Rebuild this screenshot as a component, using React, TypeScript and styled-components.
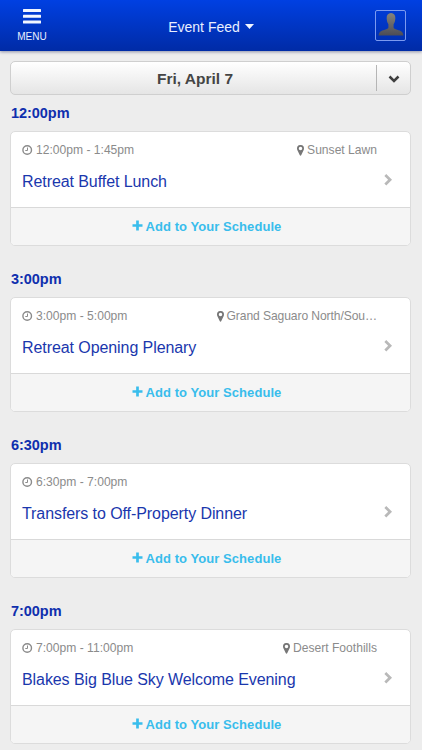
import React from "react";
import styled, { createGlobalStyle } from "styled-components";

const GlobalStyle = createGlobalStyle`
  * { box-sizing: border-box; }
  body {
    margin: 0;
    background: #ededed;
    font-family: "Liberation Sans", Arial, Helvetica, sans-serif;
  }
  button { font-family: inherit; border: 0; padding: 0; background: none; }
  svg { display: block; flex: none; }
`;

const Screen = styled.div`
  height: 750px;
  overflow: hidden;
  background: #ededed;
`;

const Header = styled.header`
  display: grid;
  grid-template-columns: 64px 1fr 64px;
  height: 51px;
  background: linear-gradient(#0040e2, #002ba6);
  box-shadow: 0 1px 3px rgba(0, 10, 70, 0.4);
  color: #e9efff;
`;

const MenuButton = styled.button`
  display: flex;
  flex-direction: column;
  align-items: center;
  justify-content: flex-start;
  padding-top: 9px;
  gap: 7px;
  color: inherit;
  font-size: 10px;
  line-height: 12px;
`;

const FeedTitle = styled.button`
  display: flex;
  align-items: center;
  justify-content: center;
  gap: 5px;
  padding-top: 2px;
  color: inherit;
  font-size: 14px;
  line-height: 18px;
`;

const Avatar = styled.div`
  display: flex;
  align-items: flex-end;
  justify-content: center;
  width: 31px;
  height: 31px;
  margin: 10px 0 0 17px;
  padding-bottom: 4px;
  border: 1px solid #7c9af0;
  border-radius: 2px;
`;

const DayPicker = styled.button`
  display: flex;
  align-items: center;
  width: 401px;
  height: 34px;
  margin: 10px 0 0 10px;
  border: 1px solid #cfcfcf;
  border-radius: 5px;
  background: linear-gradient(#ffffff, #e5e5e5);
  color: #454545;
`;

const DayLabel = styled.span`
  flex: 1;
  padding: 2px 0 0 3px;
  font-size: 15.5px;
  font-weight: bold;
  line-height: 20px;
`;

const DayToggle = styled.span`
  display: flex;
  align-items: center;
  justify-content: center;
  width: 34px;
  height: 26px;
  padding-top: 2px;
  border-left: 1px solid #b5b5b5;
`;

const Slot = styled.section`
  height: 166px;
  padding: 8px 11px 0 10px;
`;

const SlotTime = styled.h2`
  margin: 0 0 8px;
  padding-left: 1px;
  color: #0f2fae;
  font-size: 14.5px;
  font-weight: bold;
  letter-spacing: -0.05px;
  line-height: 20px;
`;

const Card = styled.article`
  height: 115px;
  overflow: hidden;
  border: 1px solid #dcdcdc;
  border-radius: 5px;
  background: #ffffff;
`;

const CardBody = styled.div`
  height: 75px;
  padding: 10px 15px 0 11px;
`;

const Meta = styled.div`
  display: flex;
  justify-content: space-between;
  padding-right: 18px;
  color: #8b8b8b;
  font-size: 12.1px;
  line-height: 16px;
`;

const MetaItem = styled.span<{ $tracking?: number }>`
  display: flex;
  align-items: center;
  gap: 3px;
  letter-spacing: ${(p) => p.$tracking ?? 0}px;
  white-space: nowrap;
`;

const TitleRow = styled.div`
  display: flex;
  align-items: center;
  justify-content: space-between;
  margin-top: 13px;
`;

const EventName = styled.h3`
  margin: 0;
  color: #1a37ad;
  font-size: 16px;
  font-weight: normal;
  letter-spacing: -0.08px;
  line-height: 22px;
`;

const ChevronBox = styled.span`
  padding: 0 2px 4px 0;
`;

const AddButton = styled.button`
  display: flex;
  align-items: center;
  justify-content: center;
  gap: 3px;
  width: 100%;
  height: 38px;
  padding-right: 8px;
  border-top: 1px solid #d9d9d9;
  background: #f5f5f5;
  color: #39bdec;
  font-size: 13px;
  font-weight: bold;
  letter-spacing: 0.06px;
  line-height: 18px;
`;

const PlusBox = styled.span`
  padding-bottom: 2px;
`;

const MenuIcon = () => (
  <svg width="18" height="15" viewBox="0 0 18 15" fill="#f1f5ff">
    <rect y="0" width="18" height="3" rx="0.5" />
    <rect y="5.8" width="18" height="3" rx="0.5" />
    <rect y="11.6" width="18" height="3" rx="0.5" />
  </svg>
);

const CaretIcon = () => (
  <svg width="9" height="5" viewBox="0 0 9 5">
    <path d="M0 0h9L4.5 5z" fill="#f1f5ff" />
  </svg>
);

const PersonIcon = () => (
  <svg width="26" height="23" viewBox="0 0 27 23" preserveAspectRatio="none">
    <defs>
      <linearGradient id="person" x1="0" y1="0" x2="0" y2="1">
        <stop offset="0" stopColor="#85837c" />
        <stop offset="1" stopColor="#4c4c56" />
      </linearGradient>
    </defs>
    <path
      d="M13.5 0c3 0 4.600 2.100 4.500 5.300-.1 2.500-.7 4.500-1.800 6v3c0 1 .8 1.500 2.200 2 4.100 1.300 7.600 1.700 8 6.200H.6c.4-4.500 3.900-4.900 8-6.200 1.400-.5 2.200-1 2.200-2v-3C9.700 9.800 9.100 7.800 9 5.300 8.900 2.100 10.500 0 13.500 0z"
      fill="url(#person)"
    />
  </svg>
);

const DownIcon = () => (
  <svg width="12" height="8" viewBox="0 0 12 8">
    <path d="M1.500 1.500 6 6l4.500-4.500" fill="none" stroke="#3f3f3f" strokeWidth="2.500" />
  </svg>
);

const ClockIcon = () => (
  <svg width="11" height="11" viewBox="0 0 11 11" fill="none" stroke="#8b8b8b">
    <circle cx="5.200" cy="5" r="4.300" strokeWidth="1.400" />
    <path d="M5.500 2.500v3H3.300" strokeWidth="1" />
  </svg>
);

const PinIcon = () => (
  <svg width="7" height="11" viewBox="0 0 7 11">
    <path
      d="M3.500 0A3.400 3.400 0 0 1 7 3.400c0 .6-.1 1-.3 1.500L4.300 10.100c-.3.700-1.300.700-1.600 0L.3 4.900C.1 4.400 0 4 0 3.400A3.400 3.400 0 0 1 3.500 0zm0 1.700a1.750 1.750 0 1 0 0 3.500 1.750 1.750 0 0 0 0-3.500z"
      fill="#777777"
      fillRule="evenodd"
    />
  </svg>
);

const RightIcon = () => (
  <svg width="9" height="12" viewBox="0 0 9 12">
    <path d="M1.300 1 6.100 5.700l-4.800 4.800" fill="none" stroke="#b9b9b9" strokeWidth="2.700" />
  </svg>
);

const PlusIcon = () => (
  <svg width="11" height="11" viewBox="0 0 11 11">
    <path d="M5.500.5v10M.5 5.500h10" stroke="#39bdec" strokeWidth="2.700" />
  </svg>
);

interface FeedEvent {
  slot: string;
  time: string;
  place?: string;
  placeTracking?: number;
  name: string;
}

const events: FeedEvent[] = [
  { slot: "12:00pm", time: "12:00pm - 1:45pm", place: "Sunset Lawn", name: "Retreat Buffet Lunch" },
  {
    slot: "3:00pm",
    time: "3:00pm - 5:00pm",
    place: "Grand Saguaro North/Sou…",
    placeTracking: -0.09,
    name: "Retreat Opening Plenary",
  },
  { slot: "6:30pm", time: "6:30pm - 7:00pm", name: "Transfers to Off-Property Dinner" },
  { slot: "7:00pm", time: "7:00pm - 11:00pm", place: "Desert Foothills", name: "Blakes Big Blue Sky Welcome Evening" },
];

const EventSlot = ({ slot, time, place, placeTracking, name }: FeedEvent) => (
  <Slot>
    <SlotTime>{slot}</SlotTime>
    <Card>
      <CardBody>
        <Meta>
          <MetaItem>
            <ClockIcon />
            {time}
          </MetaItem>
          {place && (
            <MetaItem $tracking={placeTracking}>
              <PinIcon />
              {place}
            </MetaItem>
          )}
        </Meta>
        <TitleRow>
          <EventName>{name}</EventName>
          <ChevronBox>
            <RightIcon />
          </ChevronBox>
        </TitleRow>
      </CardBody>
      <AddButton>
        <PlusBox>
          <PlusIcon />
        </PlusBox>
        Add to Your Schedule
      </AddButton>
    </Card>
  </Slot>
);

export default function App() {
  return (
    <Screen>
      <GlobalStyle />
      <Header>
        <MenuButton>
          <MenuIcon />
          MENU
        </MenuButton>
        <FeedTitle>
          Event Feed
          <CaretIcon />
        </FeedTitle>
        <Avatar>
          <PersonIcon />
        </Avatar>
      </Header>
      <DayPicker>
        <DayLabel>Fri, April 7</DayLabel>
        <DayToggle>
          <DownIcon />
        </DayToggle>
      </DayPicker>
      {events.map((event) => (
        <EventSlot key={event.slot} {...event} />
      ))}
    </Screen>
  );
}
